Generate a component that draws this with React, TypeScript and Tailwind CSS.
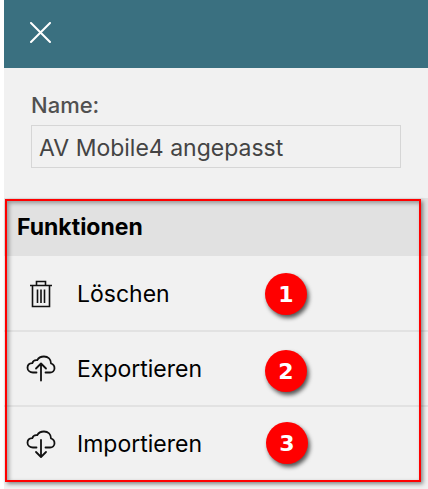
import type { ReactNode } from "react";

function TrashIcon() {
  return (
    <svg className="h-8 w-8" viewBox="0 0 32 32" fill="none" stroke="#111" strokeWidth="1.6">
      <path d="M5 6.500H27M11.500 6V2.500H20.500V6M7.500 7V27.500H24.500V7M12.500 10.500V24M16 10.500V24M19.500 10.500V24" />
    </svg>
  );
}

const CLOUD = "M11.500 18.500H8C5 18.500 2.500 16.500 2.500 13.800C2.500 11 4.500 9.300 7.300 9.200C8 7 10 5.800 12.300 6.200C13.600 3.600 16.200 2.500 19 2.500C23 2.500 26 5.200 26 9.500C28.300 10.200 29.500 11.900 29.500 14.200C29.500 16.800 27.500 18.500 25 18.500H20.500";

function CloudIcon({ arrow }: { arrow: string }) {
  return (
    <svg className="h-8 w-8" viewBox="0 0 32 32" fill="none" stroke="#111" strokeWidth="1.800" strokeLinecap="round" strokeLinejoin="round">
      <path d={CLOUD} />
      <path d={arrow} />
    </svg>
  );
}

function Badge({ children, place }: { children: ReactNode; place: string }) {
  return (
    <span
      className={`absolute flex h-[42px] w-[42px] items-center justify-center rounded-full bg-[#ff0000] font-['DejaVu_Sans',sans-serif] text-[22px] font-bold text-white shadow-[2px_3px_4px_rgba(0,0,0,0.65)] ${place}`}
    >
      {children}
    </span>
  );
}

const actions = [
  { label: "Löschen", icon: <TrashIcon />, badge: "1", place: "left-[261px] top-[16px]" },
  { label: "Exportieren", icon: <CloudIcon arrow="M16 26.500V10M11 14.500L16 9.500L21 14.500" />, badge: "2", place: "left-[261px] top-[18px]" },
  { label: "Importieren", icon: <CloudIcon arrow="M16 11V27.500M11 23L16 28L21 23" />, badge: "3", place: "left-[262px] top-[15px]" },
];

export default function App() {
  return (
    <div className="min-h-screen overflow-hidden bg-white pl-1 font-[Inter,sans-serif]">
      <main className="min-h-screen bg-[#f1f1f1]">
        <header className="flex h-17 items-center bg-[#3a7080] px-6">
          <button type="button" aria-label="Schließen" className="flex h-6 w-6 items-center justify-center text-white">
            <svg className="h-6 w-6 shrink-0" viewBox="0 0 24 24" fill="none" stroke="currentColor" strokeWidth="2" strokeLinecap="round">
              <path d="M3 1L22 20M22 1L3 20" />
            </svg>
          </button>
        </header>
        <form className="flex flex-col gap-1 pt-[21px] pr-[27px] pb-[30px] pl-[27px]">
          <label htmlFor="name" className="text-[22px] leading-8 font-medium text-[#505050]">
            Name:
          </label>
          <input
            id="name"
            type="text"
            defaultValue="AV Mobile4 angepasst"
            className="h-[43px] w-full border border-[#d6d6d6] bg-transparent px-[7px] pt-0.5 text-[23px] text-[#444] outline-none"
          />
        </form>
        <section className="relative">
          <h2 className="flex h-[58px] items-center bg-[#e1e1e1] px-[13px] text-[23px] font-bold text-black">Funktionen</h2>
          <ul>
            {actions.map((action) => (
              <li key={action.label} className="relative border-t-2 border-[#e2e2e2] first:border-t first:border-transparent">
                <button type="button" className="flex h-[73px] w-full items-center gap-5 px-[21px] pt-0.5 text-left text-[23px] text-black">
                  {action.icon}
                  {action.label}
                </button>
                <Badge place={action.place}>{action.badge}</Badge>
              </li>
            ))}
          </ul>
          <div className="pointer-events-none absolute top-px right-[7px] -bottom-0.5 left-px border-2 border-[#ff0000] shadow-[2px_2px_4px_rgba(0,0,0,0.45),inset_2px_2px_4px_rgba(0,0,0,0.35)]" />
        </section>
      </main>
    </div>
  );
}
